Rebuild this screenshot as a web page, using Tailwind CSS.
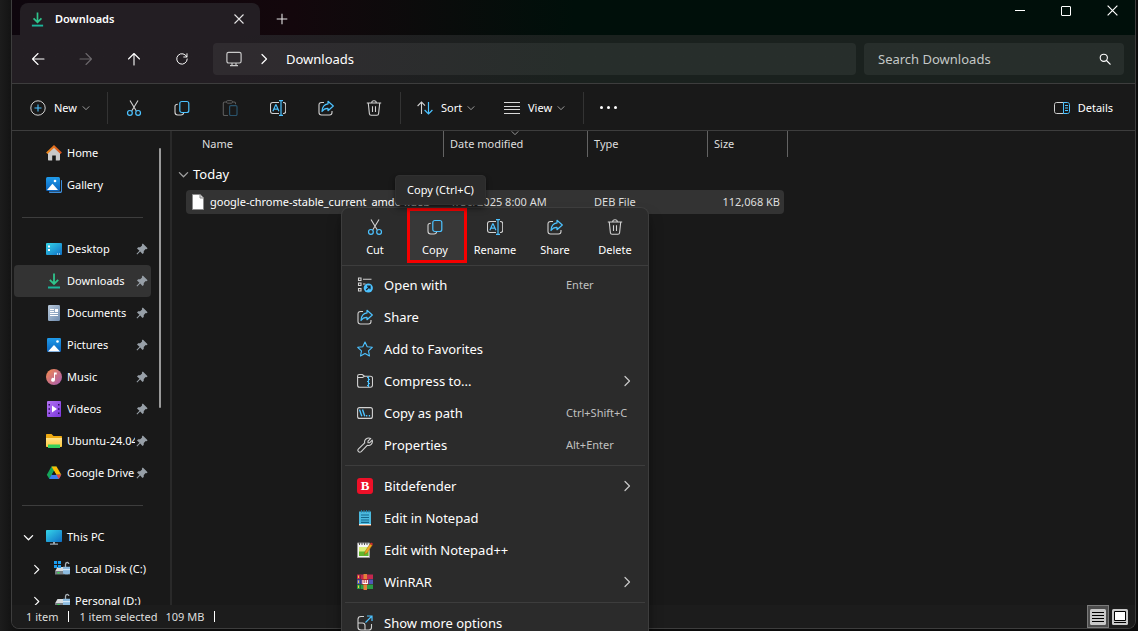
<!DOCTYPE html>
<html lang="en">
<head>
<meta charset="utf-8">
<meta name="viewport" content="width=device-width, initial-scale=1">
<title>Downloads</title>
<script src="https://cdn.jsdelivr.net/npm/@tailwindcss/browser@4"></script>
</head>
<body class="relative h-screen overflow-hidden bg-[#141214] bg-linear-to-r from-[#1c1c1c] from-0% to-[#0b0b0b] to-2% font-['Noto_Sans','Open_Sans',sans-serif] text-[11px] leading-4 text-white">

<svg class="absolute size-0" aria-hidden="true">
  <defs>
    <linearGradient id="gBlue" x1="0" y1="0" x2="1" y2="1"><stop offset="0" stop-color="#35d5e8"/><stop offset="1" stop-color="#0f6fc6"/></linearGradient>
    <linearGradient id="gPic" x1="0" y1="0" x2="0" y2="1"><stop offset="0" stop-color="#1f9bea"/><stop offset="1" stop-color="#0b63bd"/></linearGradient>
    <linearGradient id="gMusic" x1="0" y1="0" x2="1" y2="1"><stop offset="0" stop-color="#f58a4b"/><stop offset="1" stop-color="#a45bb5"/></linearGradient>
    <linearGradient id="gVideo" x1="0" y1="0" x2="1" y2="1"><stop offset="0" stop-color="#b472f2"/><stop offset="1" stop-color="#7a35dd"/></linearGradient>
    <linearGradient id="gFolder" x1="0" y1="0" x2="0" y2="1"><stop offset="0" stop-color="#ffe38a"/><stop offset="1" stop-color="#ffc93b"/></linearGradient>
    <linearGradient id="gDoc" x1="0" y1="0" x2="1" y2="1"><stop offset="0" stop-color="#b9c9db"/><stop offset="1" stop-color="#6f8cae"/></linearGradient>
    <linearGradient id="gRoof" x1="0" y1="0" x2="1" y2="0"><stop offset="0" stop-color="#f08c1e"/><stop offset="1" stop-color="#d9531e"/></linearGradient>
  </defs>
  <symbol id="download" viewBox="0 0 16 16"><path d="M8 .5v10M3.800 6.800 8 11l4.200-4.200" fill="none" stroke="#2fc48c" stroke-width="1.800"/><path d="M2 13.500h12v2H2z" fill="#1cb69b"/></symbol>
  <symbol id="close" viewBox="0 0 12 12"><path d="M1.500 1.500l9 9M10.500 1.500l-9 9" fill="none" stroke="currentColor" stroke-width="1.100"/></symbol>
  <symbol id="plus" viewBox="0 0 12 12"><path d="M6 .7v10.600M.7 6h10.600" fill="none" stroke="currentColor" stroke-width="1.100"/></symbol>
  <symbol id="left" viewBox="0 0 16 16"><path d="M14 8H2.500M8 2.500 2.500 8 8 13.500" fill="none" stroke="currentColor" stroke-width="1.100" stroke-linecap="round" stroke-linejoin="round"/></symbol>
  <symbol id="refresh" viewBox="0 0 16 16"><path d="M13.500 5.500A6 6 0 1 0 14 8M13.700 2v3.700H10" fill="none" stroke="currentColor" stroke-width="1.100" stroke-linecap="round" stroke-linejoin="round"/></symbol>
  <symbol id="monitor" viewBox="0 0 16 16"><rect x=".9" y="1.300" width="14.200" height="10.700" rx="1.700" fill="none" stroke="currentColor" stroke-width="1.200"/><path d="M6 12v2.500M10 12v2.500M4 14.700h8" fill="none" stroke="currentColor" stroke-width="1.200"/></symbol>
  <symbol id="chev" viewBox="0 0 12 12"><path d="M4 1.500 8.500 6 4 10.500" fill="none" stroke="currentColor" stroke-width="1.200" stroke-linecap="round" stroke-linejoin="round"/></symbol>
  <symbol id="chevd" viewBox="0 0 12 12"><path d="M1.500 4 6 8.500 10.500 4" fill="none" stroke="currentColor" stroke-width="1.400" stroke-linecap="round" stroke-linejoin="round"/></symbol>
  <symbol id="search" viewBox="0 0 12 12"><circle cx="4.800" cy="4.800" r="3.600" fill="none" stroke="currentColor" stroke-width="1.100"/><path d="m7.500 7.500 3.600 3.700" fill="none" stroke="currentColor" stroke-width="1.200" stroke-linecap="round"/></symbol>
  <symbol id="new" viewBox="0 0 16 16"><circle cx="8" cy="8" r="7.200" fill="none" stroke="#d2d2d2"/><path d="M8 4.500v7M4.500 8h7" fill="none" stroke="#4cc2ff" stroke-width="1.100"/></symbol>
  <symbol id="cut" viewBox="0 0 16 16"><path d="M4 .5 10.300 11M12 .5 5.700 11" fill="none" stroke="#d2d2d2" stroke-width="1.100"/><circle cx="3.900" cy="12.900" r="2.400" fill="none" stroke="#4cc2ff" stroke-width="1.200"/><circle cx="12.100" cy="12.900" r="2.400" fill="none" stroke="#4cc2ff" stroke-width="1.200"/></symbol>
  <symbol id="copy" viewBox="0 0 16 16"><path d="M3.800 4.200C1.700 4.200 1 5 1 6.500v5.800C1 14 2 15 3.700 15H7c1.700 0 2.500-.8 2.700-2.300" fill="none" stroke="#d2d2d2" stroke-width="1.100"/><rect x="5.800" y="1.500" width="9" height="11" rx="2" fill="none" stroke="#4cc2ff" stroke-width="1.200"/></symbol>
  <symbol id="paste" viewBox="0 0 16 16"><path d="M4.500 2H2.600C1.800 2 1.300 2.500 1.300 3.300v10.900c0 .8.500 1.300 1.300 1.300H6M10.500 2h1.700c.8 0 1.300.5 1.300 1.300v.9" fill="none" stroke="#5c5c5c" stroke-width="1.100"/><rect x="4.500" y=".6" width="6" height="2.600" rx="1.200" fill="none" stroke="#5c5c5c"/><rect x="7.600" y="5.600" width="7.400" height="9.900" rx="1.200" fill="none" stroke="#2a536b" stroke-width="1.200"/></symbol>
  <symbol id="rename" viewBox="0 0 16 16"><path d="M9 2.500H2.700C1.300 2.500.5 3.300.5 4.700v6.600c0 1.400.8 2.200 2.200 2.200H9M13 2.500h.5c1.400 0 2.200.8 2.200 2.200v6.600c0 1.400-.8 2.200-2.200 2.200H13" fill="none" stroke="#d2d2d2" stroke-width="1.100"/><path d="M2.900 11.300 5.700 4.800h.4l2.800 6.500M3.900 9.200h4M11 1v14M9 .7h4M9 15.300h4" fill="none" stroke="#4cc2ff" stroke-width="1.200"/></symbol>
  <symbol id="share" viewBox="0 0 16 16"><path d="M6 2.500H3.500C1.800 2.500 1 3.300 1 5v7.500C1 14.200 1.800 15 3.500 15h8c1.700 0 2.500-.8 2.500-2.500V11" fill="none" stroke="#d2d2d2" stroke-width="1.100"/><path d="M10 1.300 15.300 6 10 10.700V8.300C7.300 8.200 5.500 9.200 4 11.500 4.200 7.200 6 4.400 10 3.900z" fill="none" stroke="#4cc2ff" stroke-width="1.200" stroke-linejoin="round"/></symbol>
  <symbol id="trash" viewBox="0 0 16 16"><path d="M.8 3h14.400M5.700 2.800C5.700 1.500 6.600.8 8 .8s2.300.7 2.300 2M2.300 3.200l1.100 10.500c.1 1.100.7 1.600 1.700 1.600h5.800c1 0 1.600-.5 1.700-1.600l1.100-10.500M6.500 6.200v5.800M9.500 6.200v5.800" fill="none" stroke="#d2d2d2" stroke-width="1.100"/></symbol>
  <symbol id="sort" viewBox="0 0 16 16"><path d="M4.500 14V2.200M.6 6l3.900-4 3.500 3.600" fill="none" stroke="#d2d2d2" stroke-width="1.100"/><path d="M11.500 2v11.800M7.600 10l3.900 4 3.900-4" fill="none" stroke="#4cc2ff" stroke-width="1.200"/></symbol>
  <symbol id="view" viewBox="0 0 16 16"><path d="M0 2.500h16M0 6.500h16M0 9.500h16M0 13.500h16" stroke="#d8d8d8"/></symbol>
  <symbol id="details" viewBox="0 0 16 16"><path d="M9.500 2.500H2.700C1.300 2.500.5 3.300.5 4.700v6.600c0 1.400.8 2.200 2.200 2.200h6.800" fill="none" stroke="#d2d2d2"/><path d="M9.500 2.500h3.800c1.400 0 2.200.8 2.200 2.200v6.600c0 1.400-.8 2.200-2.200 2.200H9.500zM11 5.500h3M11 8h3M11 10.500h3" fill="none" stroke="#4cc2ff"/></symbol>
  <symbol id="home" viewBox="0 0 16 16"><path d="M2 7.500 8 2l6 5.500v7c0 .6-.4 1-1 1H9.800v-5H6.200v5H3c-.6 0-1-.4-1-1z" fill="#c9c9c9"/><path d="M.8 8.300 8 1.500l7.200 6.800" fill="none" stroke="url(#gRoof)" stroke-width="2"/></symbol>
  <symbol id="gallery" viewBox="0 0 16 16"><path d="M3 14.500h12V3h.3c.5 0 .7.300.7.800v10.400c0 1.200-.6 1.800-1.800 1.800H4c-.6 0-1-.5-1-1z" fill="#3d8fdd"/><rect x="0" y="0" width="14" height="14" rx="1.500" fill="url(#gPic)"/><path d="M1 13 6.500 6.800 12 13z" fill="#fff"/><circle cx="9" cy="4" r="1.300" fill="#fff"/></symbol>
  <symbol id="desktop" viewBox="0 0 16 16"><rect y="2" width="16" height="12" rx="1" fill="url(#gBlue)"/><path d="M2 4.500h2v2H2zM2 8h2v2H2zM11 12.500h1v1h-1zM13 12.500h1v1h-1z" fill="#fff"/></symbol>
  <symbol id="documents" viewBox="0 0 16 16"><rect x="2" width="12" height="16" rx="1.200" fill="url(#gDoc)"/><path d="M4 4.500h4M4 6.500h4M4 8.500h8M4 10.500h8" stroke="#fff"/><path d="M9 4h3v3H9z" fill="#fff"/></symbol>
  <symbol id="pictures" viewBox="0 0 16 16"><rect x="1" y="1" width="14" height="14" rx="1.200" fill="url(#gPic)"/><path d="M2 14.500 8 8l6 6.500z" fill="#fff"/><circle cx="11.500" cy="4.500" r="1.300" fill="#fff"/></symbol>
  <symbol id="music" viewBox="0 0 16 16"><circle cx="8" cy="8" r="8" fill="url(#gMusic)"/><path d="M8 3.500h2.700v2H9v5.300a1.900 1.900 0 1 1-1-1.700z" fill="#fff"/></symbol>
  <symbol id="videos" viewBox="0 0 16 16"><rect x="1" width="14" height="16" rx="1" fill="url(#gVideo)"/><path d="M2.500 3h1.500v1.500H2.500zM2.500 7.200h1.500v1.500H2.500zM2.500 11.500h1.500V13H2.500zM12 3h1.500v1.500H12zM12 7.200h1.500v1.500H12zM12 11.500h1.500V13H12z" fill="#2d1157"/><path d="m6 4.500 5 3.500-5 3.500z" fill="#fff"/></symbol>
  <symbol id="folder" viewBox="0 0 16 16"><path d="M0 2c0-.6.400-1 1-1h4.500L7.500 3H15c.6 0 1 .4 1 1v4H0z" fill="#eeaa12"/><path d="M0 5h16v8c0 .6-.4 1-1 1H1c-.6 0-1-.4-1-1z" fill="url(#gFolder)"/><path d="M2 11.500h12V15H2z" fill="#34d05c"/></symbol>
  <symbol id="drive" viewBox="0 0 16 16"><path d="M5.500 1.500h5L8 6 3.400 14 .8 9.700z" fill="#14a45a"/><path d="M5.500 1.500h5l4.800 8.200h-5z" fill="#fbbc05"/><path d="M5.500 9.700h9.800L12.900 14H3.100z" fill="#3a7df0"/><path d="M10.500 9.700h4.800L12.900 14z" fill="#e8453c"/><path d="M8 6l2.200 3.800H5.800z" fill="#191919"/></symbol>
  <symbol id="pc" viewBox="0 0 16 16"><rect y="1" width="16" height="12" rx=".8" fill="url(#gBlue)"/><path d="M7 13h2v1.500h3v1.200H4v-1.200h3z" fill="#9aa5ae"/></symbol>
  <symbol id="disk" viewBox="0 0 16 16"><path d="M3.500 6h9L16 10.500H1z" fill="#d8dcdf"/><path d="M1 10h15v3.500H1z" fill="#777e84"/><path d="M3.500 11h2v1.500h-2z" fill="#32e04c"/><path d="M11.500 6V3.500c0-2.600 3.300-2.600 3.300-.4" fill="none" stroke="#aab2b8" stroke-width="1.300"/><path d="M9 5.800h7v6.700c-1 1-5.500 1-7 0z" fill="#8dbbe0"/><path d="M9 8h7v1.200H9z" fill="#d6e9f8"/></symbol>
  <symbol id="win" viewBox="0 0 8 8"><path d="M0 0h3.500v3.500H0zM4.500 0H8v3.500H4.500zM0 4.500h3.500V8H0zM4.500 4.500H8V8H4.500z" fill="#1a9df0"/></symbol>
  <symbol id="pin" viewBox="0 0 12 12"><path d="M6.800.5 11.600 5.200 10.600 6.200 9.700 6 7.800 8 7.700 9.900 6.500 11 4.200 8.500 1.200 11.500.5 10.800 3.500 7.800 1 5.600 2.200 4.300 4.100 4.300 6.100 2.400 5.900 1.500z" fill="#979fa7"/></symbol>
  <symbol id="file" viewBox="0 0 12 16"><path d="M.5.500h7.500L11.500 4v11.500H.5z" fill="#fff" stroke="#8b8b8b"/><path d="M8 .5V4h3.500" fill="#ddd" stroke="#8b8b8b"/></symbol>
  <symbol id="openwith" viewBox="0 0 16 16"><path d="M1.500 1h2.500v2.500H1.500zM1.500 6h2.500v2.500H1.500zM1.500 11.500h2.500V14H1.500zM6 2.200h8.500M6 7h2.500" fill="none" stroke="#d2d2d2" stroke-width="1.100"/><circle cx="11.300" cy="11" r="4.600" fill="#4cc2ff"/><path d="m9.200 13 3.600-3.600M10 9.200h3v3" fill="none" stroke="#16222b" stroke-width="1.300"/></symbol>
  <symbol id="star" viewBox="0 0 16 16"><path d="m8 1 2.200 4.700 5.100.6-3.800 3.500 1 5.200L8 12.500 3.500 15l1-5.200L.7 6.300l5.100-.6z" fill="none" stroke="#4cc2ff" stroke-width="1.100" stroke-linejoin="round"/></symbol>
  <symbol id="compress" viewBox="0 0 16 16"><path d="M.6 4V3.200C.6 2 1.300 1.500 2.300 1.500h3L7.500 3.300h6c1.200 0 2 .7 2 1.900v7c0 1.300-.8 2-2 2H2.600c-1.200 0-2-.7-2-2V4.500h5L7.500 3.300" fill="none" stroke="#d2d2d2" stroke-width="1.100"/><path d="M11.500 3.300V14M10 4.500h1.500M11.500 6.500H13M10 8.500h1.500M11.500 10.500H13M10 12.500h1.500" fill="none" stroke="#4cc2ff" stroke-width="1.200"/></symbol>
  <symbol id="path" viewBox="0 0 16 16"><rect x=".6" y="2.600" width="14.800" height="10.800" rx="2" fill="none" stroke="#d2d2d2" stroke-width="1.100"/><path d="m2.500 4.500 2.300 6.700M5.500 4.500l2.300 6.700M9 10.700h1.300M11.800 10.700h1.300" fill="none" stroke="#4cc2ff" stroke-width="1.400"/></symbol>
  <symbol id="wrench" viewBox="0 0 16 16"><path d="M13.800 1.400 11 4.200v1.600h1.500l2.700-2.600c.9 3.200-1.800 6-5 5.100l-6 6.300c-1.900 1.700-4.500-.8-2.700-2.700l6.200-6C6.800 2.700 10 .1 13.800 1.400z" fill="none" stroke="#d2d2d2" stroke-width="1.100" stroke-linejoin="round"/></symbol>
  <symbol id="notepad" viewBox="0 0 16 16"><path d="M2 1.500h12v13H2z" fill="#4bb9de"/><path d="M2 14h12v1.500H2z" fill="#e9e9e9"/><path d="M2 15.200h12v.8H2z" fill="#b46a3c"/><path d="M4 5h8M4 7.500h8M4 10h8M4 12.400h8" stroke="#14668b" stroke-width="1.100"/><path d="M4.500 0v2.500M7 0v2.500M9.500 0v2.500M12 0v2.500" stroke="#1b7fa8"/></symbol>
  <symbol id="npp" viewBox="0 0 16 16"><path d="M.5 1h12v14.500H.5z" fill="#f6f6f6" stroke="#9a9a9a"/><path d="M2 5h9.500v9H2z" fill="#d9ee7a"/><path d="M2 9.500h9.500V14H2z" fill="#62b52d"/><path d="M2.500 0v3M5 0v3M7.500 0v3M10 0v3" stroke="#555"/><path d="m7.300 12.500 1-3.300 4.800-7.400 2.200 1.400-4.900 7.400z" fill="#f2a51e" stroke="#8a5a12" stroke-width=".5"/><path d="m13 2 1-1.600 2 1.300-.8 1.600z" fill="#d32f2f"/></symbol>
  <symbol id="winrar" viewBox="0 0 16 16"><path d="M0 .5h16V5H0z" fill="#c4284f"/><path d="M0 5.500h16V10H0z" fill="#5256b8"/><path d="M0 10.500h16V15H0z" fill="#2b9a45"/><path d="M1.500 1.500v2.500M1.500 6.500V9M1.500 11.500V14" stroke="#f0d33a"/><path d="M3.500 1v4M3.500 6v4M3.500 11v4" stroke="#000" stroke-opacity=".3"/><path d="M6.500 0h3.500v16H6.500z" fill="#e2803a"/><path d="M4.800 5h6.700v5.500H4.800z" fill="#b3202a"/><path d="M6 6v3.500h4.300V6M8.200 6v3" fill="none" stroke="#fff" stroke-width="1.200"/></symbol>
  <symbol id="more" viewBox="0 0 16 16"><path d="M7 1.500H4C2 1.500 1 2.500 1 4.300v8C1 14 2 15 4 15h7.500c2 0 3-1 3-2.800V9M1 8h4.500C7 8 8 9 8 10.500V15" fill="none" stroke="#d2d2d2" stroke-width="1.100"/><path d="M8.500 7.500 14.500 1.500M10 1h5v5" fill="none" stroke="#4cc2ff" stroke-width="1.200"/></symbol>
</svg>

<div class="mr-[2px] ml-[11px] flex h-[calc(100vh-2px)] flex-col overflow-hidden rounded-b-lg border border-t-0 border-[#3d3d3d] bg-[#191919]">

  <!-- Title bar -->
  <header class="flex h-[35px] shrink-0 items-end bg-linear-to-r from-[#0e060d] via-[#13070c] via-25% to-[#000f0a] to-50%">
    <div class="ml-2 flex h-8 w-60 items-center rounded-t-lg bg-[#231e23] pr-[15px] pl-[10px]">
      <svg class="size-[15px]"><use href="#download"/></svg>
      <span class="ml-[10px] flex-1 font-semibold">Downloads</span>
      <button aria-label="Close tab" class="text-[#e4e4e4]"><svg class="size-3"><use href="#close"/></svg></button>
    </div>
    <button aria-label="New tab" class="ml-4 flex h-8 w-3 items-center text-[#e4e4e4]"><svg class="size-3"><use href="#plus"/></svg></button>
    <div class="ml-auto flex self-start">
      <button aria-label="Minimize" class="flex h-[21px] w-[46px] items-center justify-center"><span class="h-px w-[10px] bg-white"></span></button>
      <button aria-label="Maximize" class="flex h-[21px] w-[46px] items-center justify-center"><span class="size-[10px] rounded-[1px] border border-white"></span></button>
      <button aria-label="Close" class="flex h-[21px] w-[46px] items-center justify-center"><svg class="size-[13px]"><use href="#close"/></svg></button>
    </div>
  </header>

  <!-- Navigation -->
  <div class="flex h-12 shrink-0 items-center bg-linear-to-r from-[#231e23] from-20% to-[#1a211e] to-50% pr-[11px] pl-[2px]">
    <button aria-label="Back" class="flex w-12 justify-center"><svg class="size-4"><use href="#left"/></svg></button>
    <button aria-label="Forward" class="flex w-12 justify-center text-[#6b676b]"><svg class="size-4 rotate-180"><use href="#left"/></svg></button>
    <button aria-label="Up" class="flex w-12 justify-center"><svg class="size-4 rotate-90"><use href="#left"/></svg></button>
    <button aria-label="Refresh" class="flex w-12 justify-center"><svg class="size-[14px]"><use href="#refresh"/></svg></button>
    <nav aria-label="Address" class="ml-[7px] flex h-8 flex-1 items-center rounded bg-white/6 pl-[13px] text-[13px]">
      <svg class="size-4 text-[#c9c9c9]"><use href="#monitor"/></svg>
      <svg class="ml-4 size-3"><use href="#chev"/></svg>
      <a href="#" class="ml-4">Downloads</a>
    </nav>
    <label class="ml-2 flex h-8 w-[260px] items-center rounded bg-white/6 pr-[13px] pl-[14px]">
      <input type="text" aria-label="Search Downloads" placeholder="Search Downloads" class="min-w-0 flex-1 bg-transparent text-[13px] outline-none placeholder:text-[#c4c8c6]">
      <svg class="size-3"><use href="#search"/></svg>
    </label>
  </div>

  <!-- Command bar -->
  <div class="flex h-12 shrink-0 items-center border-y border-[#3d3d3d] bg-[#191919] pt-px">
    <button class="flex w-[95px] items-center pl-[18px]"><svg class="size-4"><use href="#new"/></svg><span class="ml-2">New</span><svg class="ml-[5px] size-2 text-[#a8a8a8]"><use href="#chevd"/></svg></button>
    <div class="h-8 w-px bg-[#333]"></div>
    <div class="flex px-[2px]">
      <button aria-label="Cut" class="flex w-12 justify-center"><svg class="size-4"><use href="#cut"/></svg></button>
      <button aria-label="Copy" class="flex w-12 justify-center"><svg class="size-4"><use href="#copy"/></svg></button>
      <button aria-label="Paste" class="flex w-12 justify-center"><svg class="size-4"><use href="#paste"/></svg></button>
      <button aria-label="Rename" class="flex w-12 justify-center"><svg class="size-4"><use href="#rename"/></svg></button>
      <button aria-label="Share" class="flex w-12 justify-center"><svg class="size-4"><use href="#share"/></svg></button>
      <button aria-label="Delete" class="flex w-12 justify-center"><svg class="size-4"><use href="#trash"/></svg></button>
    </div>
    <div class="h-8 w-px bg-[#333]"></div>
    <button class="flex w-[87px] items-center pl-4"><svg class="size-4"><use href="#sort"/></svg><span class="ml-2">Sort</span><svg class="ml-[5px] size-2 text-[#a8a8a8]"><use href="#chevd"/></svg></button>
    <button class="flex w-[95px] items-center pl-4"><svg class="size-4"><use href="#view"/></svg><span class="ml-2">View</span><svg class="ml-[5px] size-2 text-[#a8a8a8]"><use href="#chevd"/></svg></button>
    <div class="h-8 w-px bg-[#333]"></div>
    <button aria-label="See more" class="flex w-12 justify-center gap-[4px]"><span class="size-[3px] rounded-full bg-white"></span><span class="size-[3px] rounded-full bg-white"></span><span class="size-[3px] rounded-full bg-white"></span></button>
    <button class="mr-[22px] ml-auto flex items-center gap-2"><svg class="size-4"><use href="#details"/></svg>Details</button>
  </div>

  <div class="flex min-h-0 flex-1">
    <!-- Navigation pane -->
    <aside class="flex w-[160px] shrink-0 border-r-2 border-[#292929]">
      <ul class="ml-[2px] w-[137px] shrink-0 overflow-hidden pt-[6px] whitespace-nowrap [&_a]:flex [&_a]:h-8 [&_a]:items-center">
        <li><a href="#" class="pl-8"><svg class="size-4 shrink-0"><use href="#home"/></svg><span class="ml-[5px]">Home</span></a></li>
        <li><a href="#" class="pl-8"><svg class="size-4 shrink-0"><use href="#gallery"/></svg><span class="ml-[5px]">Gallery</span></a></li>
        <li class="flex h-8 items-center px-2"><hr class="w-full border-[#3d3d3d]"></li>
        <li><a href="#" class="pr-[3px] pl-8"><svg class="size-4 shrink-0"><use href="#desktop"/></svg><span class="ml-[5px] flex-1 overflow-hidden">Desktop</span><svg class="ml-px size-3 shrink-0"><use href="#pin"/></svg></a></li>
        <li><a href="#" aria-current="page" class="rounded-sm bg-[#333] pr-[3px] pl-8"><svg class="size-4 shrink-0"><use href="#download"/></svg><span class="ml-[5px] flex-1 overflow-hidden">Downloads</span><svg class="ml-px size-3 shrink-0"><use href="#pin"/></svg></a></li>
        <li><a href="#" class="pr-[3px] pl-8"><svg class="size-4 shrink-0"><use href="#documents"/></svg><span class="ml-[5px] flex-1 overflow-hidden">Documents</span><svg class="ml-px size-3 shrink-0"><use href="#pin"/></svg></a></li>
        <li><a href="#" class="pr-[3px] pl-8"><svg class="size-4 shrink-0"><use href="#pictures"/></svg><span class="ml-[5px] flex-1 overflow-hidden">Pictures</span><svg class="ml-px size-3 shrink-0"><use href="#pin"/></svg></a></li>
        <li><a href="#" class="pr-[3px] pl-8"><svg class="size-4 shrink-0"><use href="#music"/></svg><span class="ml-[5px] flex-1 overflow-hidden">Music</span><svg class="ml-px size-3 shrink-0"><use href="#pin"/></svg></a></li>
        <li><a href="#" class="pr-[3px] pl-8"><svg class="size-4 shrink-0"><use href="#videos"/></svg><span class="ml-[5px] flex-1 overflow-hidden">Videos</span><svg class="ml-px size-3 shrink-0"><use href="#pin"/></svg></a></li>
        <li><a href="#" class="pr-[3px] pl-8"><svg class="size-4 shrink-0"><use href="#folder"/></svg><span class="ml-[5px] flex-1 overflow-hidden">Ubuntu-24.04</span><svg class="ml-px size-3 shrink-0"><use href="#pin"/></svg></a></li>
        <li><a href="#" class="pr-[3px] pl-8"><svg class="size-4 shrink-0"><use href="#drive"/></svg><span class="ml-[5px] flex-1 overflow-hidden">Google Drive</span><svg class="ml-px size-3 shrink-0"><use href="#pin"/></svg></a></li>
        <li class="flex h-8 items-center px-2"><hr class="w-full border-[#3d3d3d]"></li>
        <li><a href="#" class="pl-[9px]"><svg class="size-[11px] shrink-0"><use href="#chevd"/></svg><svg class="ml-3 size-4 shrink-0"><use href="#pc"/></svg><span class="ml-[5px]">This PC</span></a></li>
        <li><a href="#" class="pl-[17px]"><svg class="size-[11px] shrink-0"><use href="#chev"/></svg><svg class="ml-3 size-4 shrink-0"><use href="#disk"/><use href="#win" width="7" height="7"/></svg><span class="ml-[5px]">Local Disk (C:)</span></a></li>
        <li><a href="#" class="pl-[17px]"><svg class="size-[11px] shrink-0"><use href="#chev"/></svg><svg class="ml-3 size-4 shrink-0"><use href="#disk"/></svg><span class="ml-[5px]">Personal (D:)</span></a></li>
      </ul>
      <div class="mt-[17px] ml-2 h-[260px] w-[2px] rounded-full bg-[#9a9a9a]"></div>
    </aside>

    <!-- File list -->
    <main class="min-w-0 flex-1 pl-[14px]">
      <table class="w-[602px] table-fixed border-separate border-spacing-0 text-left whitespace-nowrap">
        <colgroup><col class="w-[258px]"><col class="w-36"><col class="w-[120px]"><col class="w-20"></colgroup>
        <thead class="text-[#dedede]">
          <tr class="h-[26px]">
            <th class="border-r border-[#636363] pl-4 font-normal">Name</th>
            <th class="relative border-r border-[#636363] pl-[6px] font-normal">Date modified<svg class="absolute top-[-2px] left-[67px] size-2 text-[#a0a0a0]"><use href="#chevd"/></svg></th>
            <th class="border-r border-[#636363] pl-[6px] font-normal">Type</th>
            <th class="border-r border-[#636363] pl-[6px] font-normal">Size</th>
          </tr>
        </thead>
        <tbody>
          <tr class="h-[33px]">
            <th colspan="4" class="pt-px font-normal"><button class="-ml-2 flex items-center gap-1 text-[13px]"><svg class="size-[11px] text-[#a0a0a0]"><use href="#chevd"/></svg>Today</button></th>
          </tr>
          <tr class="h-6">
            <td class="overflow-visible rounded-l-sm bg-[#333] p-0"><div class="flex items-center gap-[6px] pl-[6px]"><svg class="h-4 w-3 shrink-0"><use href="#file"/></svg><span>google-chrome-stable_current_amd64.deb</span></div></td>
            <td class="bg-[#333] pl-[6px] text-[#dedede]">1/30/2025 8:00 AM</td>
            <td class="bg-[#333] pl-[6px] text-[#dedede]">DEB File</td>
            <td class="p-0 text-[#dedede]"><div class="mr-1 flex h-6 items-center justify-end rounded-r-sm bg-[#333] pr-1">112,068 KB</div></td>
          </tr>
        </tbody>
      </table>
    </main>
  </div>

  <!-- Status bar -->
  <footer class="flex h-[23px] shrink-0 items-center bg-[#1c1c1c] pr-1 pl-[14px] text-[#dedede]">
    <span>1 item</span><span class="ml-[10px] h-[11px] w-px bg-white"></span>
    <span class="ml-[10px]">1 item selected</span><span class="ml-2">109 MB</span><span class="ml-[10px] h-[11px] w-px bg-white"></span>
    <div class="ml-auto flex items-center">
      <button aria-label="Details view" class="flex h-[23px] w-[22px] items-center justify-center border border-[#7a7a7a] bg-[#4d4d4d]"><svg class="size-4" viewBox="0 0 16 16"><rect width="16" height="16" rx="1.500" fill="#c9c9c9"/><path d="M2 3.500h12M2 6.500h12M2 9.500h12M2 12.500h12" stroke="#000"/></svg></button>
      <button aria-label="Large icons view" class="flex h-[23px] w-[22px] items-center justify-center"><svg class="size-4" viewBox="0 0 16 16"><rect width="16" height="16" rx="1.500" fill="#c9c9c9"/><path d="M2.500 2.500h11v9h-11z" fill="#fff" stroke="#000"/><path d="M2 13.500h12" stroke="#000"/></svg></button>
    </div>
  </footer>
</div>

<!-- Context menu -->
<div role="menu" class="absolute top-[207px] left-[341px] w-[308px] rounded-t-lg border border-b-0 border-[#3d3d3d] bg-[#2b2b2b] pb-1 shadow-lg shadow-black/50">
  <div class="flex h-[58px] border-b border-[#3d3d3d] px-[3px] [&>button]:flex [&>button]:w-[60px] [&>button]:flex-col [&>button]:items-center [&>button]:gap-[7px] [&>button]:pt-[11px]">
    <button role="menuitem"><svg class="size-4"><use href="#cut"/></svg>Cut</button>
    <button role="menuitem" class="relative"><span class="absolute top-0 right-[-2px] left-[2px] h-[55px] border-[3px] border-[#f60000] bg-[#383838]"></span><svg class="relative size-4"><use href="#copy"/></svg><span class="relative">Copy</span></button>
    <button role="menuitem"><svg class="size-4"><use href="#rename"/></svg>Rename</button>
    <button role="menuitem"><svg class="size-4"><use href="#share"/></svg>Share</button>
    <button role="menuitem"><svg class="size-4"><use href="#trash"/></svg>Delete</button>
  </div>
  <div class="pt-[3px] text-[13px] [&>button]:flex [&>button]:h-8 [&>button]:w-full [&>button]:items-center [&>button]:gap-[11px] [&>button]:pl-[15px] [&>button]:text-left">
    <button role="menuitem"><svg class="size-4"><use href="#openwith"/></svg><span class="flex-1">Open with</span><kbd class="w-[82px] font-[inherit] text-[11px] text-[#c0c0c0]">Enter</kbd></button>
    <button role="menuitem"><svg class="size-4"><use href="#share"/></svg>Share</button>
    <button role="menuitem"><svg class="size-4"><use href="#star"/></svg>Add to Favorites</button>
    <button role="menuitem"><svg class="size-4"><use href="#compress"/></svg><span class="flex-1">Compress to...</span><svg class="mr-[15px] size-3 text-[#c9c9c9]"><use href="#chev"/></svg></button>
    <button role="menuitem"><svg class="size-4"><use href="#path"/></svg><span class="flex-1">Copy as path</span><kbd class="w-[82px] font-[inherit] text-[11px] text-[#c0c0c0]">Ctrl+Shift+C</kbd></button>
    <button role="menuitem"><svg class="size-4"><use href="#wrench"/></svg><span class="flex-1">Properties</span><kbd class="w-[82px] font-[inherit] text-[11px] text-[#c0c0c0]">Alt+Enter</kbd></button>
    <hr class="mx-[3px] my-1 border-[#3d3d3d]">
    <button role="menuitem"><span class="flex size-4 items-center justify-center rounded-[3px] bg-[#ed1028] font-['Liberation_Serif',serif] text-[13px] font-bold" aria-hidden="true">B</span><span class="flex-1">Bitdefender</span><svg class="mr-[15px] size-3 text-[#c9c9c9]"><use href="#chev"/></svg></button>
    <button role="menuitem"><svg class="size-4"><use href="#notepad"/></svg>Edit in Notepad</button>
    <button role="menuitem"><svg class="size-4"><use href="#npp"/></svg>Edit with Notepad++</button>
    <button role="menuitem"><svg class="size-4"><use href="#winrar"/></svg><span class="flex-1">WinRAR</span><svg class="mr-[15px] size-3 text-[#c9c9c9]"><use href="#chev"/></svg></button>
    <hr class="mx-[3px] my-1 border-[#3d3d3d]">
    <button role="menuitem"><svg class="size-4"><use href="#more"/></svg>Show more options</button>
  </div>
</div>

<!-- Tooltip -->
<div role="tooltip" class="absolute top-[175px] left-[395px] flex h-[30px] w-[91px] items-center justify-center rounded border border-[#303030] bg-[#2b2b2b] whitespace-nowrap shadow-md shadow-black/50">Copy (Ctrl+C)</div>

</body>
</html>
